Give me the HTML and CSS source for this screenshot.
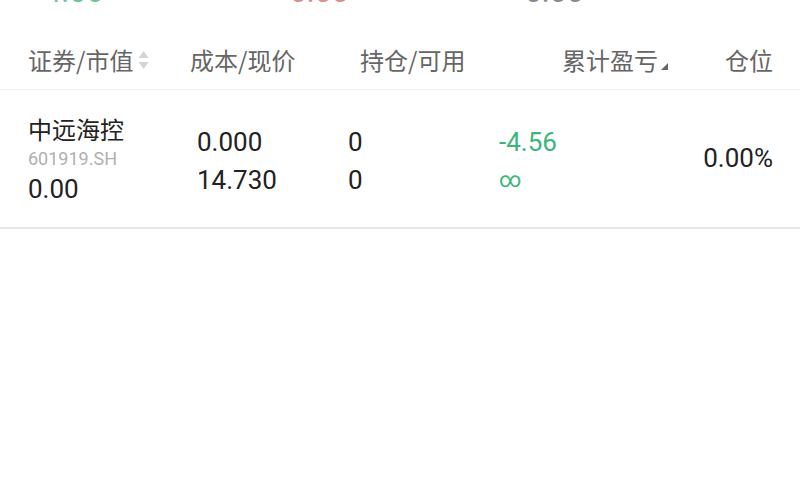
FILE: index.html
```html
<!DOCTYPE html>
<html lang="zh-CN">
<head>
<meta charset="utf-8">
<title>持仓</title>
<link rel="stylesheet" href="styles.css">
</head>
<body>
<div class="page">
  <div class="summary">
    <span class="sum sum-green">-4.56</span>
    <span class="sum sum-red">0.00</span>
    <span class="sum sum-dark">0.00</span>
  </div>
  <div class="head">
    <div class="h h1">证券/市值<svg class="sort" width="11" height="20" viewBox="0 0 11 20"><path d="M5.5 1 L10.5 8 L0.5 8 Z" fill="#d4d4d4"/><path d="M0.5 12 L10.5 12 L5.5 19 Z" fill="#d4d4d4"/></svg></div>
    <div class="h h2">成本/现价</div>
    <div class="h h3">持仓/可用</div>
    <div class="h h4">累计盈亏<svg class="corner" width="7" height="7" viewBox="0 0 7 7"><path d="M7 0 L7 7 L0 7 Z" fill="#666"/></svg></div>
    <div class="h h5">仓位</div>
  </div>
  <div class="row">
    <div class="c c1">
      <div class="name">中远海控</div>
      <div class="code">601919.SH</div>
      <div class="num">0.00</div>
    </div>
    <div class="c c2">
      <div class="num line">0.000</div>
      <div class="num line">14.730</div>
    </div>
    <div class="c c3">
      <div class="num line">0</div>
      <div class="num line">0</div>
    </div>
    <div class="c c4">
      <div class="num line green">-4.56</div>
      <div class="num line green inf">∞</div>
    </div>
    <div class="c c5">
      <div class="num">0.00%</div>
    </div>
  </div>
</div>
</body>
</html>
```
FILE: styles.css
```css
html, body {
  margin: 0;
  padding: 0;
  background: #ffffff;
}
body {
  font-family: Roboto, "Noto Sans CJK SC", sans-serif;
  color: #222222;
  overflow: hidden;
}
.page {
  width: 800px;
  height: 500px;
  overflow: hidden;
}
.summary {
  display: flex;
  height: 30px;
  margin-top: -23px;
  font-size: 30px;
  line-height: 30px;
}
.sum { display: block; }
.sum-green { color: #6cc79a; margin-left: 36px; width: 254px; }
.sum-red { color: #e08a8a; width: 235px; }
.sum-dark { color: #8a8a8a; }

.head {
  display: flex;
  align-items: center;
  padding: 38px 0 14px 28px;
  border-bottom: 1px solid #eeeeee;
  font-family: "Noto Sans CJK SC", sans-serif;
  font-size: 24px;
  line-height: 30px;
  color: #666666;
}
.h { display: flex; align-items: center; }
.h1 { width: 162px; }
.sort { margin-left: 5px; }
.h2 { width: 170px; }
.h3 { width: 202px; }
.h4 { width: 163px; align-items: flex-end; }
.corner { margin-left: 3px; margin-bottom: 5px; }

.row {
  display: flex;
  align-items: flex-start;
  padding: 24px 27px 23px 28px;
  border-bottom: 2px solid #e6e6e6;
  height: 90px;
}
.c { display: flex; flex-direction: column; }
.num {
  font-size: 26px;
  line-height: 30px;
}
.name {
  font-family: "Noto Sans CJK SC", sans-serif;
  font-size: 24px;
  line-height: 30px;
  color: #222222;
}
.code {
  font-size: 18px;
  line-height: 30px;
  color: #b0b0b0;
}
.c1 { width: 169px; }
.c2 { width: 151px; margin-top: 9px; }
.c3 { width: 151px; margin-top: 9px; }
.c4 { width: 150px; margin-top: 9px; }
.c5 { flex: 1; margin-top: 29px; text-align: right; }
.line { line-height: 38px; }
.green { color: #3bb57a; }
.inf { font-size: 22px; }
```
